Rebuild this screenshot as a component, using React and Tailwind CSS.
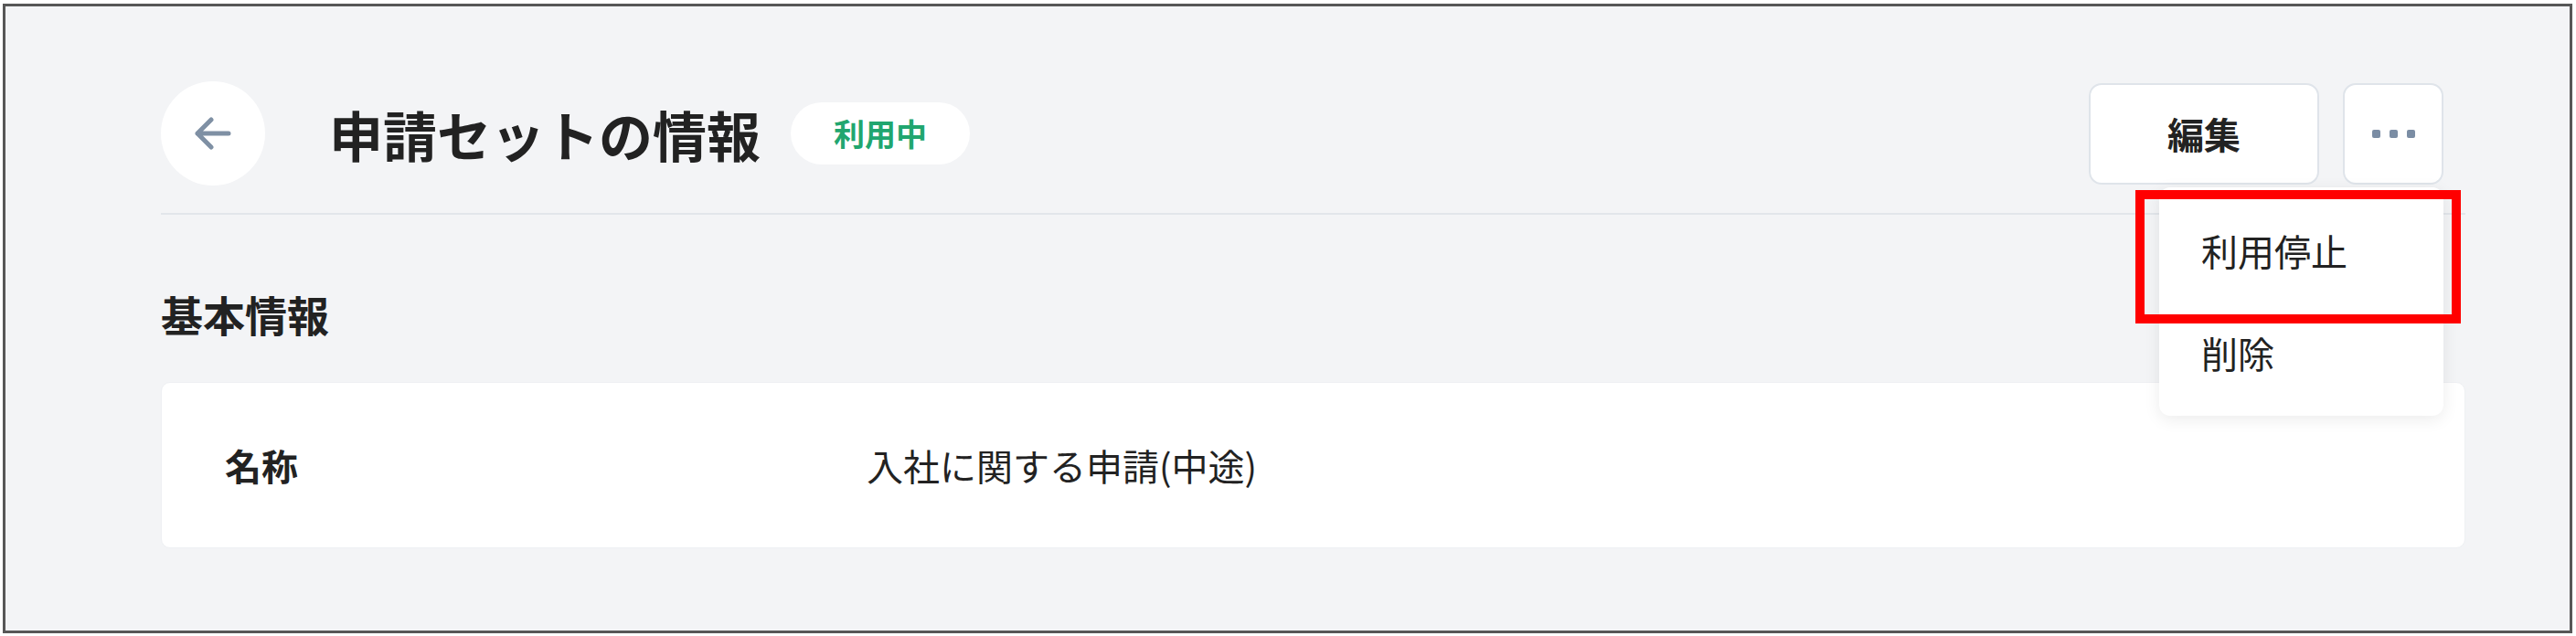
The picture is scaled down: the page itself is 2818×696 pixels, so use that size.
import React from "react";

const font = { fontFamily: '"Noto Sans CJK JP", "Noto Sans", sans-serif' };

function ArrowLeft() {
  return (
    <svg width="40" height="36" viewBox="0 0 40 36" fill="none">
      <path d="M18 3 L3 18 L18 33 M3 18 H37" stroke="#7f90a4" strokeWidth="5" strokeLinecap="round" strokeLinejoin="round" />
    </svg>
  );
}

export default function App() {
  return (
    <div className="w-[2818px] h-[696px] bg-white pt-[4px] pl-[3px] pr-[4px] pb-[3px]" style={font}>
      <div className="h-full border-[3px] border-[#575757] bg-[#f3f4f6] pl-[170px] pr-[114px] pt-[82px] text-[#222222]">
        {/* Header */}
        <div className="flex items-center justify-between h-[114px] pr-[24px]">
          <div className="flex items-center">
            <button className="w-[114px] h-[114px] rounded-full bg-white flex items-center justify-center">
              <ArrowLeft />
            </button>
            <h1 className="ml-[70px] text-[59px] leading-none font-bold tracking-normal">申請セットの情報</h1>
            <span className="ml-[33px] h-[68px] px-[47px] rounded-full bg-white flex items-center text-[34px] leading-none font-bold text-[#21a66f]">
              利用中
            </span>
          </div>
          <div className="flex items-center gap-[26px]">
            <button className="w-[252px] h-[111px] rounded-[14px] border-2 border-[#dfe4ea] bg-white flex items-center justify-center text-[40px] leading-none font-bold">
              編集
            </button>
            <div className="relative">
              <button className="w-[110px] h-[111px] rounded-[14px] border-2 border-[#dfe4ea] bg-white flex items-center justify-center gap-[10px]">
                <span className="w-[9px] h-[9px] rounded-[2px] bg-[#7b8da4]" />
                <span className="w-[9px] h-[9px] rounded-[2px] bg-[#7b8da4]" />
                <span className="w-[9px] h-[9px] rounded-[2px] bg-[#7b8da4]" />
              </button>
              <div className="absolute right-0 top-[calc(100%+3px)] w-[311px] py-[13px] bg-white rounded-[12px] shadow-[0_4px_18px_rgba(0,0,0,0.08)] z-10">
                <div className="h-[112px] flex items-center pl-[46px] text-[40px] leading-none text-[#222222]">利用停止</div>
                <div className="h-[112px] flex items-center pl-[46px] text-[40px] leading-none text-[#222222]">削除</div>
              </div>
              <div className="absolute right-[-19px] top-[calc(100%+6px)] w-[356px] h-[146px] border-[10px] border-[#ff0000] z-20 pointer-events-none" />
            </div>
          </div>
        </div>

        {/* Divider */}
        <div className="mt-[30px] h-[2px] bg-[#e2e6eb]" />

        {/* Section title */}
        <h2 className="mt-[85px] text-[46px] leading-none font-bold">基本情報</h2>

        {/* Card */}
        <div className="mt-[52px] h-[182px] bg-white rounded-[10px] border border-[#eef0f3] flex items-center px-[69px]">
          <div className="w-[702px] text-[40px] leading-none font-bold">名称</div>
          <div className="text-[40px] leading-none text-[#222222]">入社に関する申請(中途)</div>
        </div>
      </div>
    </div>
  );
}
